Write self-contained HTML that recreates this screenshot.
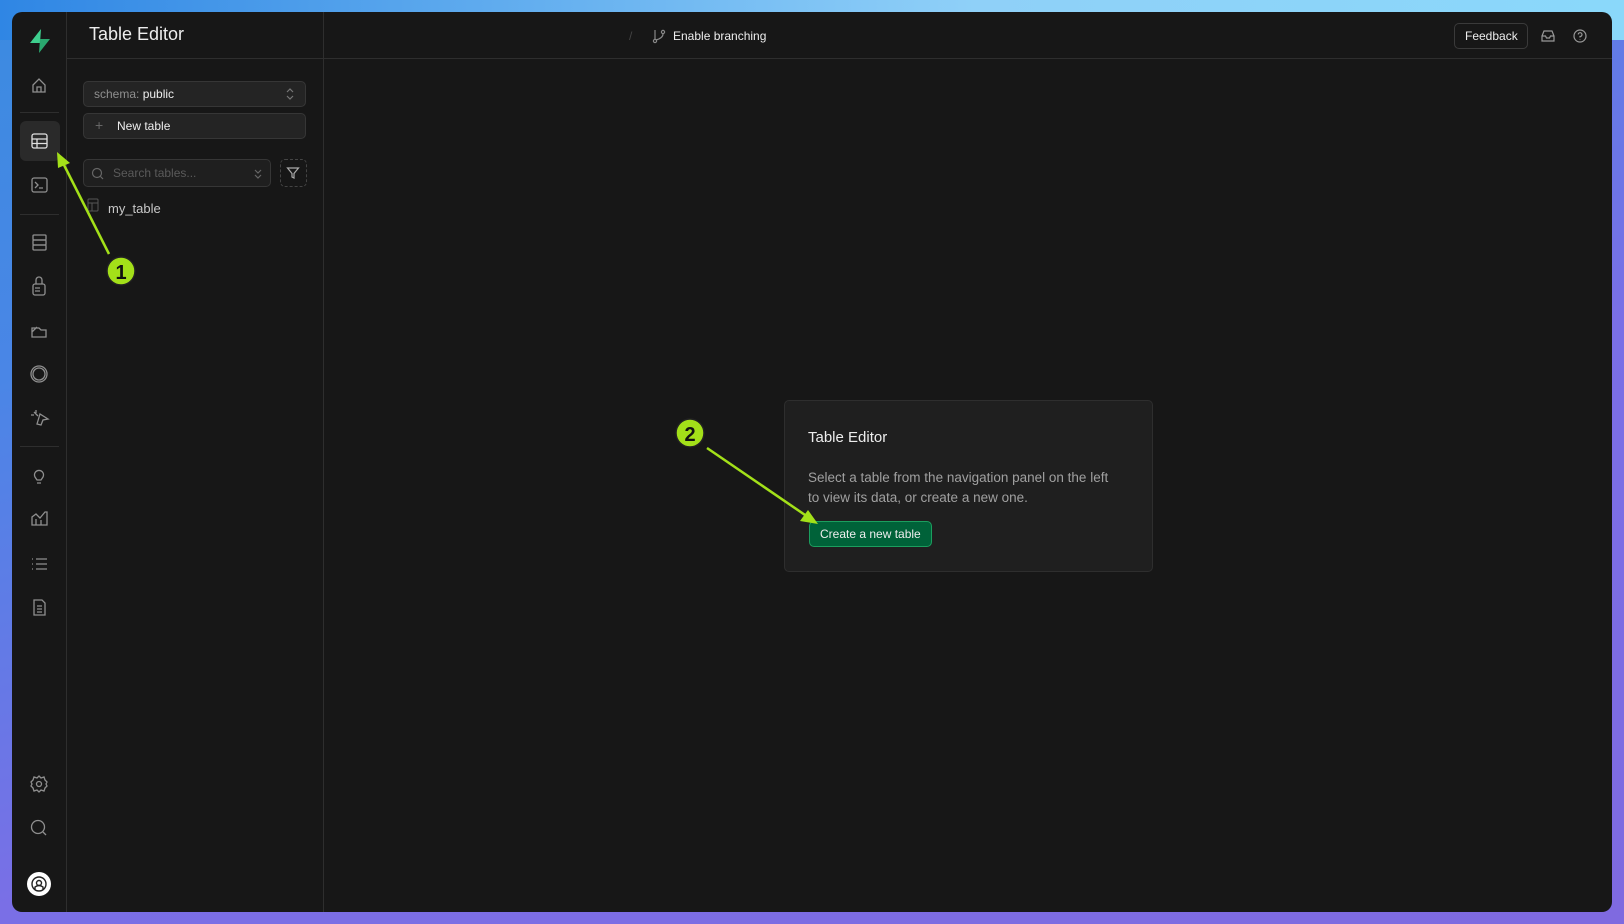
<!DOCTYPE html>
<html><head><meta charset="utf-8"><style>
*{margin:0;padding:0;box-sizing:border-box}
body{width:1624px;height:924px;overflow:hidden;font-family:"Liberation Sans",sans-serif;background:linear-gradient(160deg,#3b8be0 0%,#4a86e6 25%,#7a6fe6 60%,#7f6ae0 100%);position:relative}
.bgtop{position:absolute;left:0;top:0;width:1624px;height:40px;background:linear-gradient(90deg,#2f86e4,#8fd0f8 60%,#8ad8fa)}
.win{position:absolute;left:12px;top:12px;width:1600px;height:900px;background:#171717;border-radius:10px;overflow:hidden}
.side{position:absolute;left:0;top:0;width:55px;height:900px;border-right:1px solid #2e2e2e}
.panel{position:absolute;left:55px;top:0;width:257px;height:900px;border-right:1px solid #2e2e2e}
.hdr{position:absolute;left:55px;top:0;right:0;height:47px;border-bottom:1px solid #2e2e2e}
.ic{position:absolute;left:0;width:55px;display:flex;justify-content:center}
svg{display:block}
.t{position:absolute;color:#ededed;white-space:nowrap}
</style></head><body>
<div class="bgtop"></div>
<div class="win">
 <div class="hdr"></div>
 <div class="side">
  <div class="ic" style="top:16px"><svg width="26" height="26" viewBox="0 0 26 26"><path d="M14 1 L3 15 H13 Z" fill="#3ecf8e"/><path d="M12 25 L23 11 H13 Z" fill="#2aa86f"/></svg></div>
  <div style="position:absolute;left:8px;top:100px;width:39px;border-top:1px solid #2e2e2e"></div>
  <div style="position:absolute;left:8px;top:202px;width:39px;border-top:1px solid #2e2e2e"></div>
  <div style="position:absolute;left:8px;top:434px;width:39px;border-top:1px solid #2e2e2e"></div>
  <div style="position:absolute;left:8px;top:109px;width:40px;height:40px;background:#2a2a2a;border-radius:6px"></div>
  <svg style="position:absolute;left:0;top:0" width="55" height="900" fill="none" stroke="#8f8f8f" stroke-width="1.3">
   <path d="M21 73 L27 67 L33 73 V80 H21 Z M25 80 V75 H29 V80"/>
   <g stroke="#e0e0e0"><rect x="20" y="122" width="15" height="14" rx="2"/><path d="M20 127 H35 M20 131.5 H35 M25 127 V136"/></g>
   <rect x="20" y="166" width="15" height="14" rx="2"/><path d="M23 170 L26 173 L23 176 M27 176 H31"/>
   <rect x="21" y="223" width="13" height="5" rx="1"/><rect x="21" y="228" width="13" height="5" rx="1"/><rect x="21" y="233" width="13" height="5" rx="1"/>
   <rect x="21" y="272" width="12" height="11" rx="2"/><path d="M24 272 V268 A3 3 0 0 1 30 268 V272 M23 276 H28 M23 279 H28"/>
   <path d="M20 316 H27 L29 318 H34 V325 H20 Z M20 320 L25 315"/>
   <circle cx="27" cy="362" r="6"/><circle cx="27" cy="362" r="8"/>
   <path d="M22 400 L26 404 M25 412 L28 402 L36 407 L31 408 L29 413 Z M24 398 V401 M19 403 H22"/>
   <path d="M23 465 A4.5 4.5 0 1 1 31 465 L29 468 H25 Z M25 471 H29"/>
   <path d="M20 513 V505 L24 502 L28 506 L33 500 L35 500 V513 Z M24 513 V507 M29 513 V508"/>
   <path d="M20 547 H21 M20 552 H21 M20 557 H21 M24 547 H35 M24 552 H35 M24 557 H35"/>
   <path d="M22 588 H30 L33 591 V603 H22 Z M25 594 H30 M25 597 H30 M25 600 H30"/>
   <circle cx="27" cy="772" r="2.5"/><path d="M27 764 L29 766 L32 765 L33 768 L35 770 L34 772 L35 774 L33 776 L32 779 L29 778 L27 780 L25 778 L22 779 L21 776 L19 774 L20 772 L19 770 L21 768 L22 765 L25 766 Z"/>
   <circle cx="26" cy="815" r="6.5"/><path d="M31 820 L34 823"/>
  </svg>
  <div style="position:absolute;left:15px;top:860px;width:24px;height:24px;border-radius:50%;background:#fff"></div>
  <svg style="position:absolute;left:15px;top:860px" width="24" height="24" fill="none" stroke="#222" stroke-width="1.4"><circle cx="12" cy="12" r="7"/><circle cx="12" cy="11" r="2.5"/><path d="M8 18 V15 Q12 12 16 15 V18"/></svg>
 </div>
 <div class="panel">
  <div class="t" style="left:22px;top:12px;font-size:18px">Table Editor</div>
  <div style="position:absolute;left:16px;top:69px;width:223px;height:26px;background:#242424;border:1px solid #363636;border-radius:5px"></div>
  <div class="t" style="left:27px;top:75px;font-size:12px;color:#8f8f8f">schema: <span style="color:#ededed">public</span></div>
  <svg style="position:absolute;left:218px;top:75px" width="10" height="14" fill="none" stroke="#777" stroke-width="1.2"><path d="M2 5 L5 2 L8 5 M2 9 L5 12 L8 9"/></svg>
  <div style="position:absolute;left:16px;top:101px;width:223px;height:26px;background:#242424;border:1px solid #363636;border-radius:5px"></div>
  <div class="t" style="left:28px;top:105px;font-size:14px;color:#666">+</div>
  <div class="t" style="left:50px;top:107px;font-size:12px">New table</div>
  <div style="position:absolute;left:16px;top:147px;width:188px;height:28px;background:#1f1f1f;border:1px solid #363636;border-radius:5px"></div>
  <svg style="position:absolute;left:24px;top:155px" width="14" height="14" fill="none" stroke="#666" stroke-width="1.2"><circle cx="6" cy="6" r="4.5"/><path d="M9.5 9.5 L12 12"/></svg>
  <div class="t" style="left:46px;top:154px;font-size:12px;color:#5a5a5a">Search tables...</div>
  <svg style="position:absolute;left:186px;top:155px" width="10" height="14" fill="none" stroke="#666" stroke-width="1.2"><path d="M2 3 L5 6 L8 3 M2 8 L5 11 L8 8"/></svg>
  <div style="position:absolute;left:213px;top:147px;width:27px;height:28px;border:1px dashed #444;border-radius:5px"></div>
  <svg style="position:absolute;left:219px;top:154px" width="14" height="14" fill="none" stroke="#aaa" stroke-width="1.2"><path d="M1.5 2 H12.5 L8 7.5 V12 L6 11 V7.5 Z"/></svg>
  <svg style="position:absolute;left:20px;top:186px" width="12" height="14" fill="none" stroke="#555" stroke-width="1"><rect x="1" y="1" width="10" height="12" rx="1"/><path d="M1 5 H11 M5 5 V13"/></svg>
  <div class="t" style="left:41px;top:189px;font-size:13px;color:#c8c8c8">my_table</div>
 </div>
 <div class="t" style="left:617px;top:17px;font-size:12px;color:#444">/</div>
 <svg style="position:absolute;left:640px;top:16px" width="14" height="16" fill="none" stroke="#888" stroke-width="1.2"><circle cx="3" cy="13" r="1.6"/><circle cx="11" cy="4" r="1.6"/><path d="M3 2 V11 M11 6 Q11 10 4 12"/></svg>
 <div class="t" style="left:661px;top:17px;font-size:12px">Enable branching</div>
 <div style="position:absolute;left:1442px;top:11px;width:74px;height:26px;border:1px solid #3a3a3a;border-radius:5px"></div>
 <div class="t" style="left:1453px;top:17px;font-size:12px">Feedback</div>
 <svg style="position:absolute;left:1528px;top:17px" width="16" height="14" fill="none" stroke="#999" stroke-width="1.2"><path d="M2 7 L4 2 H12 L14 7 V12 H2 Z M2 7 H5.5 L6.5 9 H9.5 L10.5 7 H14"/></svg>
 <svg style="position:absolute;left:1560px;top:16px" width="16" height="16" fill="none" stroke="#999" stroke-width="1.2"><circle cx="8" cy="8" r="6"/><path d="M6.2 6.4 A1.9 1.9 0 1 1 8 8.5 V9.5 M8 11.2 V11.8"/></svg>
 <div style="position:absolute;left:772px;top:388px;width:369px;height:172px;background:#1f1f1f;border:1px solid #2e2e2e;border-radius:5px"></div>
 <div class="t" style="left:796px;top:417px;font-size:15px">Table Editor</div>
 <div class="t" style="left:796px;top:456px;font-size:13.5px;color:#a0a0a0;line-height:20px">Select a table from the navigation panel on the left<br>to view its data, or create a new one.</div>
 <div style="position:absolute;left:797px;top:509px;width:123px;height:26px;background:#006239;border:1px solid #1b9e5e;border-radius:5px"></div>
 <div class="t" style="left:808px;top:515px;font-size:12px">Create a new table</div>
</div>
<svg style="position:absolute;left:0;top:0" width="1624" height="924">
 <g stroke="#a3e019" stroke-width="2.5" fill="#a3e019">
  <line x1="109" y1="254" x2="63" y2="163"/><path d="M57 152 L70 163 L58 168 Z" stroke="none"/>
  <line x1="707" y1="448" x2="808" y2="517"/><path d="M818 524 L800 521 L808 510 Z" stroke="none"/>
 </g>
 <circle cx="121" cy="271" r="14" fill="#a3e019" stroke="#222" stroke-width="1.5"/>
 <text x="121" y="279" text-anchor="middle" font-family="Liberation Sans" font-weight="bold" font-size="20" fill="#111">1</text>
 <circle cx="690" cy="433" r="14" fill="#a3e019" stroke="#222" stroke-width="1.5"/>
 <text x="690" y="441" text-anchor="middle" font-family="Liberation Sans" font-weight="bold" font-size="20" fill="#111">2</text>
</svg>
</body></html>
